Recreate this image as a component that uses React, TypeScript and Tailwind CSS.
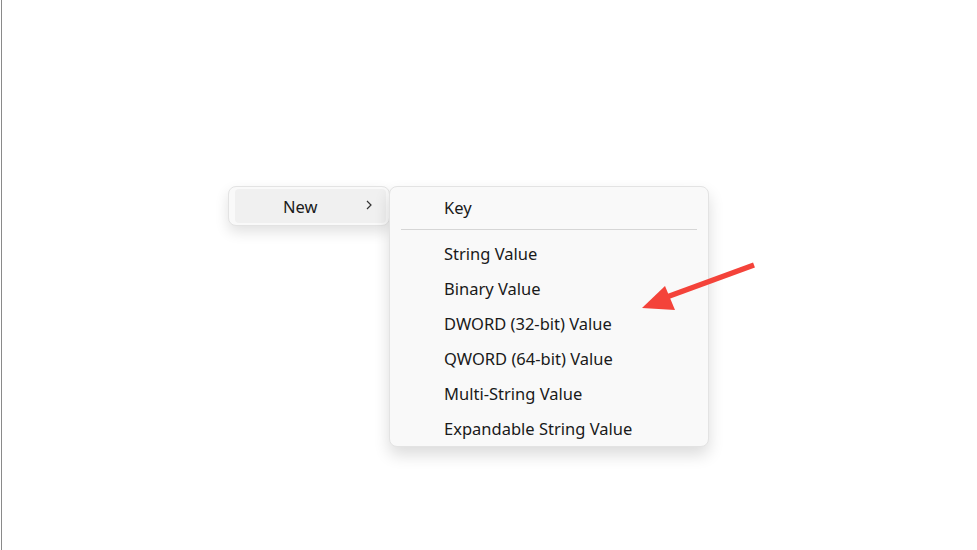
import React from 'react'

const items = [
  'String Value',
  'Binary Value',
  'DWORD (32-bit) Value',
  'QWORD (64-bit) Value',
  'Multi-String Value',
  'Expandable String Value',
]

function MenuRow({ label }: { label: string }) {
  return (
    <div className="h-[35px] flex items-center pl-[54px] text-[16.5px] text-[#1a1a1a]">
      {label}
    </div>
  )
}

export default function App() {
  return (
    <div
      className="relative w-[977px] h-[550px] bg-white overflow-hidden"
      style={{ fontFamily: '"Noto Sans", "Open Sans", sans-serif' }}
    >
      {/* left window edge */}
      <div className="absolute left-[1px] top-0 w-px h-full bg-[#8a8a8a]" />

      {/* context menu */}
      <div className="absolute left-[228px] top-[186px] w-[162px] h-[40px] bg-[#f9f9f9] border border-[#e3e3e3] rounded-[8px] shadow-[0_6px_14px_rgba(0,0,0,0.12)] p-[2px] pl-[6px] pr-[3px]">
        <div className="h-full flex items-center bg-[#f0f0f0] rounded-[4px] pl-[48px] pr-[12px] text-[16.5px] text-[#1a1a1a]">
          <span className="flex-1 pt-[3px]">New</span>
          <svg width="10" height="10" viewBox="0 0 10 10" className="mb-[3px]">
            <path d="M3 1 L7 5 L3 9" fill="none" stroke="#333" strokeWidth="1.2" />
          </svg>
        </div>
      </div>

      {/* submenu */}
      <div className="absolute left-[389px] top-[186px] w-[320px] h-[261px] bg-[#f9f9f9] border border-[#e3e3e3] rounded-[8px] shadow-[0_8px_16px_rgba(0,0,0,0.14)] pt-[4px]">
        <MenuRow label="Key" />
        <div className="mx-[11px] mt-[3px] mb-[7px] h-px bg-[#d6d6d6]" />
        {items.map((t) => (
          <MenuRow key={t} label={t} />
        ))}
      </div>

      {/* annotation arrow */}
      <svg className="absolute left-0 top-0" width="977" height="550" viewBox="0 0 977 550">
        <line x1="754" y1="265" x2="664" y2="298" stroke="#f4433a" strokeWidth="5.5" strokeLinecap="butt" />
        <polygon points="642,308 665,286 675,310" fill="#f4433a" />
      </svg>
    </div>
  )
}
